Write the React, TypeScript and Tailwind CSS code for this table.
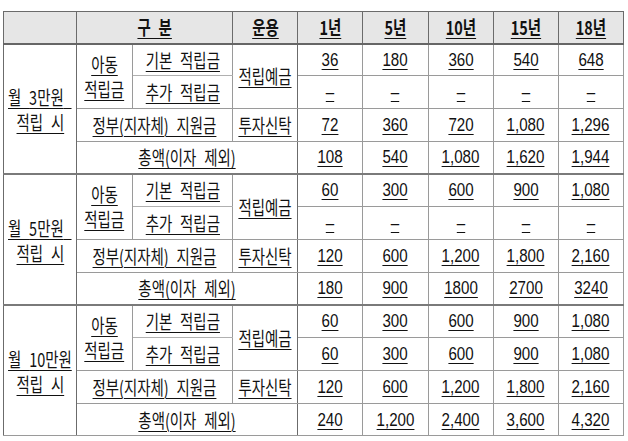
import React from 'react';

type Group = {
  label: string;
  basic: string[];
  extra: string[];
  gov: string[];
  total: string[];
};

const dash = ['–', '–', '–', '–', '–'];

const groups: Group[] = [
  {
    label: '3만원',
    basic: ['36', '180', '360', '540', '648'],
    extra: dash,
    gov: ['72', '360', '720', '1,080', '1,296'],
    total: ['108', '540', '1,080', '1,620', '1,944'],
  },
  {
    label: '5만원',
    basic: ['60', '300', '600', '900', '1,080'],
    extra: dash,
    gov: ['120', '600', '1,200', '1,800', '2,160'],
    total: ['180', '900', '1800', '2700', '3240'],
  },
  {
    label: '10만원',
    basic: ['60', '300', '600', '900', '1,080'],
    extra: ['60', '300', '600', '900', '1,080'],
    gov: ['120', '600', '1,200', '1,800', '2,160'],
    total: ['240', '1,200', '2,400', '3,600', '4,320'],
  },
];

const years = ['1년', '5년', '10년', '15년', '18년'];

// korean label, condensed like the source document
function K({ children, bold = false }: { children: React.ReactNode; bold?: boolean }) {
  return (
    <div className="flex justify-center">
      <span
        className={`inline-block shrink-0 whitespace-nowrap scale-x-[0.76] font-['Noto_Sans_CJK_KR',sans-serif] text-[19px] leading-[22px] [word-spacing:6px] text-[#111] underline decoration-1 underline-offset-[3px] ${
          bold ? 'font-bold' : 'font-normal'
        }`}
      >
        {children}
      </span>
    </div>
  );
}

function N({ children }: { children: React.ReactNode }) {
  return (
    <div className="flex justify-center">
      <span className="inline-block shrink-0 whitespace-nowrap scale-x-[0.84] font-['Liberation_Sans',sans-serif] text-[18px] leading-[22px] text-[#111] underline decoration-1 underline-offset-[3px]">
        {children}
      </span>
    </div>
  );
}

const td = 'border border-[#9a9a9a] p-0 align-middle text-center';

function Values({ vals }: { vals: string[] }) {
  return (
    <>
      {vals.map((v, i) => (
        <td key={i} className={td}>
          <N>{v}</N>
        </td>
      ))}
    </>
  );
}

export default function App() {
  return (
    <div className="w-[628px] h-[441px] bg-white pl-[3px] pt-[11px]">
      <table className="w-[620px] table-fixed border-collapse border border-[#6b6b6b]">
        <colgroup>
          <col className="w-[73px]" />
          <col className="w-[56px]" />
          <col className="w-[100px]" />
          <col className="w-[65px]" />
          <col className="w-[65px]" />
          <col className="w-[66px]" />
          <col className="w-[65px]" />
          <col className="w-[65px]" />
          <col className="w-[65px]" />
        </colgroup>
        <thead>
          <tr className="h-[32px] bg-[#e6e6e6]">
            <th className="border border-[#6b6b6b] border-b-2 border-b-[#666] p-0" />
            <th colSpan={2} className="border border-[#6b6b6b] border-b-2 border-b-[#666] p-0">
              <K bold>구 분</K>
            </th>
            <th className="border border-[#6b6b6b] border-b-2 border-b-[#666] p-0">
              <K bold>운용</K>
            </th>
            {years.map((y) => (
              <th key={y} className="border border-[#6b6b6b] border-b-2 border-b-[#666] p-0">
                <K bold>{y}</K>
              </th>
            ))}
          </tr>
        </thead>
        {groups.map((g, gi) => (
          <tbody key={g.label}>
            <tr className={gi === 0 ? 'h-[32px]' : 'h-[33px]'}>
              <td
                rowSpan={4}
                className={`${td} border-l-[#6b6b6b] border-r-[#6b6b6b] ${gi > 0 ? 'border-t-2 border-t-[#7a7a7a]' : ''}`}
              >
                <div className="flex flex-col gap-[3px] pt-[2px]">
                  <K>
                    월 {g.label}
                    {g.label.length < 4 ? '\u00a0' : ''}
                  </K>
                  <K>적립 시</K>
                </div>
              </td>
              <td rowSpan={2} className={`${td} ${gi > 0 ? 'border-t-2 border-t-[#7a7a7a]' : ''}`}>
                <div className="flex flex-col gap-[3px]">
                  <K>아동</K>
                  <K>적립금</K>
                </div>
              </td>
              <td className={`${td} border-b-[#b0b0b0] ${gi > 0 ? 'border-t-2 border-t-[#7a7a7a]' : ''}`}>
                <K>기본 적립금</K>
              </td>
              <td
                rowSpan={2}
                className={`${td} border-r-[#6b6b6b] ${gi > 0 ? 'border-t-2 border-t-[#7a7a7a]' : ''}`}
              >
                <K>적립예금</K>
              </td>
              {g.basic.map((v, i) => (
                <td key={i} className={`${td} ${gi > 0 ? 'border-t-2 border-t-[#7a7a7a]' : ''}`}>
                  <N>{v}</N>
                </td>
              ))}
            </tr>
            <tr className="h-[33px]">
              <td className={td}>
                <K>추가 적립금</K>
              </td>
              <Values vals={g.extra} />
            </tr>
            <tr className="h-[33px]">
              <td colSpan={2} className={td}>
                <K>정부(지자체) 지원금</K>
              </td>
              <td className={`${td} border-r-[#6b6b6b]`}>
                <K>투자신탁</K>
              </td>
              <Values vals={g.gov} />
            </tr>
            <tr className="h-[32px]">
              <td colSpan={3} className={`${td} border-r-[#6b6b6b]`}>
                <K>총액(이자 제외)</K>
              </td>
              <Values vals={g.total} />
            </tr>
          </tbody>
        ))}
      </table>
    </div>
  );
}
